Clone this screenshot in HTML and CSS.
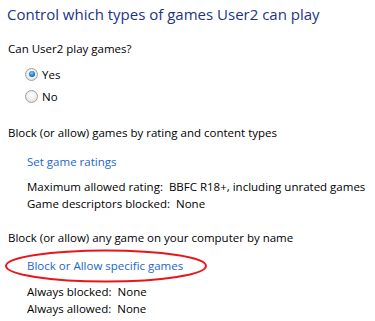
FILE: index.html
```html
<!DOCTYPE html>
<html lang="en">
<head>
  <meta charset="UTF-8">
  <meta name="viewport" content="width=device-width, initial-scale=1.0">
  <title>Game Controls</title>
  <link rel="stylesheet" href="styles.css">
</head>
<body>
  <div class="page">
    <h1 class="title">Control which types of games User2 can play</h1>

    <p class="question">Can User2 play games?</p>
    <div class="radios">
      <label class="radio"><span class="dot checked"></span>Yes</label>
      <label class="radio"><span class="dot"></span>No</label>
    </div>

    <p class="section">Block (or allow) games by rating and content types</p>
    <a class="link first" href="#">Set game ratings</a>
    <div class="info">
      <div>Maximum allowed rating:&nbsp; BBFC R18+, including unrated games</div>
      <div>Game descriptors blocked:&nbsp; None</div>
    </div>

    <p class="section second">Block (or allow) any game on your computer by name</p>
    <div class="marked">
      <a class="link" href="#">Block or Allow specific games</a>
      <svg class="circle" width="206" height="36" viewBox="0 0 206 36">
        <ellipse cx="103" cy="18" rx="100" ry="15.5" fill="none" stroke="#e8161b" stroke-width="2"/>
      </svg>
    </div>
    <div class="info tight">
      <div>Always blocked:&nbsp; None</div>
      <div>Always allowed:&nbsp; None</div>
    </div>
  </div>
</body>
</html>
```

FILE: styles.css
```css
:root {
  --title-color: #1e3287;
  --link-color: #1a66d0;
  --text-color: #000;
}

body {
  margin: 0;
  background: #fff;
  font-family: "Open Sans", "Noto Sans", Arial, sans-serif;
  font-size: 11.5px;
  color: var(--text-color);
}

.page {
  padding: 4px 0 0 8px;
}

.title {
  margin: 0 0 0 -1px;
  font-size: 15px;
  font-weight: normal;
  line-height: 20px;
  color: var(--title-color);
}

p {
  margin: 0;
  line-height: 17px;
}

.question {
  margin-top: 16px;
}

.radios {
  margin-top: 6px;
  padding-left: 17px;
}

.radio {
  display: flex;
  align-items: center;
  height: 22px;
  gap: 4px;
}

.dot {
  position: relative;
  width: 11px;
  height: 11px;
  border: 1px solid #a2a2a2;
  border-radius: 50%;
  background: radial-gradient(circle at 50% 40%, #ffffff 0%, #ececec 55%, #d6d6d6 100%);
}

.dot.checked::after {
  content: "";
  position: absolute;
  left: 2.5px;
  top: 2.5px;
  width: 6px;
  height: 6px;
  border-radius: 50%;
  background: radial-gradient(circle at 45% 35%, #8fd4f5 0%, #2a8ad4 45%, #0d3f7d 100%);
}

.section {
  margin-top: 17px;
}

.section.second {
  margin-top: 17px;
}

.link {
  display: block;
  margin-left: 19px;
  line-height: 17px;
  color: var(--link-color);
  text-decoration: none;
}

.link.first {
  margin-top: 12px;
}

.info {
  margin-top: 8px;
  padding-left: 19px;
  line-height: 17px;
}

.info.tight {
  margin-top: 9px;
}

.marked {
  position: relative;
  margin-top: 11px;
}

.circle {
  position: absolute;
  left: -5px;
  top: -9px;
}
```
